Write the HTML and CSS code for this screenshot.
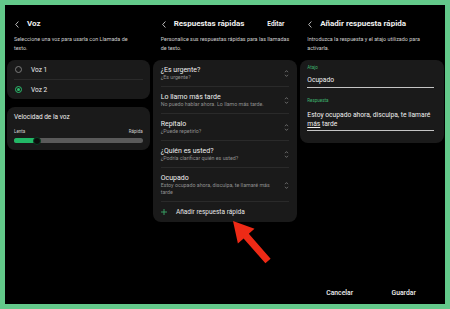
FILE: index.html
```html
<!DOCTYPE html>
<html lang="es">
<head>
  <meta charset="UTF-8">
  <meta name="viewport" content="width=device-width, initial-scale=1.0">
  <title>Respuestas rápidas</title>
  <link rel="stylesheet" href="styles.css">
</head>
<body>
  <div class="page">
    <div class="frame">

      <!-- Voz -->
      <section class="screen">
        <header class="bar">
          <svg class="back" viewBox="0 0 4 7"><path d="M3.4 0.5 L0.7 3.5 L3.4 6.5"/></svg>
          <h1>Voz</h1>
        </header>
        <p class="desc">Seleccione una voz para usarla con Llamada de<br>texto.</p>
        <div class="card">
          <div class="opt"><span class="radio"></span>Voz 1</div>
          <div class="divider"></div>
          <div class="opt"><span class="radio on"></span>Voz 2</div>
        </div>
        <div class="card speed">
          <div class="speed-title">Velocidad de la voz</div>
          <div class="speed-labels"><span>Lenta</span><span>Rápida</span></div>
          <div class="track">
            <div class="fill" style="width:18.1%"></div>
            <span class="thumb" style="left:18.1%"></span>
          </div>
        </div>
      </section>

      <!-- Respuestas rápidas -->
      <section class="screen">
        <header class="bar">
          <svg class="back" viewBox="0 0 4 7"><path d="M3.4 0.5 L0.7 3.5 L3.4 6.5"/></svg>
          <h1>Respuestas rápidas</h1>
          <span class="edit">Editar</span>
        </header>
        <p class="desc">Personalice sus respuestas rápidas para las llamadas<br>de texto.</p>
        <div class="card list">
          <div class="row">
            <div class="txt"><div class="t">¿Es urgente?</div><div class="s">¿Es urgente?</div></div>
            <svg class="updown" viewBox="0 0 5 9"><path d="M1 3.2 L2.5 1.6 L4 3.2 M1 5.8 L2.5 7.4 L4 5.8"/></svg>
          </div>
          <div class="row">
            <div class="txt"><div class="t">Lo llamo más tarde</div><div class="s">No puedo hablar ahora. Lo llamo más tarde.</div></div>
            <svg class="updown" viewBox="0 0 5 9"><path d="M1 3.2 L2.5 1.6 L4 3.2 M1 5.8 L2.5 7.4 L4 5.8"/></svg>
          </div>
          <div class="row">
            <div class="txt"><div class="t">Repítalo</div><div class="s">¿Puede repetirlo?</div></div>
            <svg class="updown" viewBox="0 0 5 9"><path d="M1 3.2 L2.5 1.6 L4 3.2 M1 5.8 L2.5 7.4 L4 5.8"/></svg>
          </div>
          <div class="row">
            <div class="txt"><div class="t">¿Quién es usted?</div><div class="s">¿Podría clarificar quién es usted?</div></div>
            <svg class="updown" viewBox="0 0 5 9"><path d="M1 3.2 L2.5 1.6 L4 3.2 M1 5.8 L2.5 7.4 L4 5.8"/></svg>
          </div>
          <div class="row">
            <div class="txt"><div class="t">Ocupado</div><div class="s">Estoy ocupado ahora, disculpa, te llamaré más<br>tarde</div></div>
            <svg class="updown" viewBox="0 0 5 9"><path d="M1 3.2 L2.5 1.6 L4 3.2 M1 5.8 L2.5 7.4 L4 5.8"/></svg>
          </div>
          <div class="add">
            <svg class="plus" viewBox="0 0 6 6"><path d="M3 0 V6 M0 3 H6"/></svg>
            Añadir respuesta rápida
          </div>
        </div>
      </section>

      <!-- Añadir respuesta rápida -->
      <section class="screen">
        <header class="bar">
          <svg class="back" viewBox="0 0 4 7"><path d="M3.4 0.5 L0.7 3.5 L3.4 6.5"/></svg>
          <h1>Añadir respuesta rápida</h1>
        </header>
        <p class="desc">Introduzca la respuesta y el atajo utilizado para<br>activarla.</p>
        <div class="card form">
          <div class="label">Atajo</div>
          <div class="value">Ocupado</div>
          <div class="label second">Respuesta</div>
          <div class="value multi">Estoy ocupado ahora, disculpa, te llamaré<br><u>más</u> tarde</div>
        </div>
        <div class="actions">
          <span class="action">Cancelar</span>
          <span class="action">Guardar</span>
        </div>
      </section>

    </div>

    <svg class="arrow" viewBox="0 0 450 309">
      <polygon points="233,221 254.5,228.8 248.8,233.8 270.6,258.7 265.4,263.3 243.6,238.4 237.9,243.4"/>
    </svg>
  </div>
</body>
</html>
```

FILE: styles.css
```css
* {
  box-sizing: border-box;
}
body {
  margin: 0;
  background: #63c98a;
  font-family: Roboto, 'Noto Sans', sans-serif;
  color: #f0f0f0;
}
.page {
  position: relative;
  width: 450px;
  height: 309px;
  padding: 5px;
}
.frame {
  display: grid;
  grid-template-columns: repeat(3, 1fr);
  height: 299px;
  background: #000;
}
.screen {
  display: flex;
  flex-direction: column;
  min-width: 0;
  padding: 0 1.5px;
}
.bar {
  display: flex;
  align-items: center;
  height: 10px;
  margin-top: 14px;
  padding: 0 8.5px;
}
.back {
  width: 4px;
  height: 7px;
  margin-right: 8px;
  flex: none;
}
.back path {
  fill: none;
  stroke: #e6e6e6;
  stroke-width: 0.8;
}
h1 {
  flex: 1;
  margin: 0;
  font-size: 8px;
  font-weight: 700;
  line-height: 10px;
  white-space: nowrap;
}
.edit {
  font-size: 6.5px;
  font-weight: 700;
  margin-right: 4px;
}
.desc {
  margin: 5.8px 0 0;
  padding: 0 7.5px;
  font-size: 5.4px;
  line-height: 9px;
  color: #cfcfcf;
  white-space: nowrap;
}
.card {
  background: #1a1a1a;
  border-radius: 8px;
  margin-top: 7.2px;
}

/* voz */
.opt {
  display: flex;
  align-items: center;
  height: 19.2px;
  padding: 0 8.3px;
  font-size: 6.5px;
}
.divider {
  height: 1px;
  margin: 0 7.5px;
  background: #2a2a2a;
}
.radio {
  display: grid;
  place-items: center;
  width: 7px;
  height: 7px;
  margin-right: 9.2px;
  border: 1px solid #7b7b7b;
  border-radius: 50%;
}
.radio.on {
  border-color: #2bbf6e;
}
.radio.on::after {
  content: '';
  width: 3px;
  height: 3px;
  border-radius: 50%;
  background: #2bbf6e;
}
.speed {
  margin-top: 8px;
  padding: 6px 7.5px 6.8px;
}
.speed-title {
  font-size: 6.5px;
  line-height: 8px;
}
.speed-labels {
  display: flex;
  justify-content: space-between;
  margin-top: 8px;
  font-size: 4.5px;
  line-height: 6px;
  color: #d0d0d0;
}
.track {
  position: relative;
  height: 5px;
  margin-top: 2.9px;
  border-radius: 3px;
  background: #5a5a5a;
}
.fill {
  height: 100%;
  border-radius: 3px 0 0 3px;
  background: #22b866;
}
.thumb {
  position: absolute;
  top: -1.5px;
  width: 8px;
  height: 8px;
  margin-left: -4px;
  border-radius: 50%;
  background: #0c0c0c;
  border: 1px solid #0a3d22;
}

/* respuestas */
.row {
  display: flex;
  align-items: center;
  margin: 0 7.5px;
  padding: 6px 0 4.5px;
}
.row + .row,
.add {
  border-top: 1px solid #2a2a2a;
}
.txt {
  flex: 1;
  min-width: 0;
}
.t {
  font-size: 7px;
  line-height: 8px;
}
.s {
  font-size: 5.3px;
  line-height: 7.5px;
  color: #8f8f8f;
  white-space: nowrap;
}
.updown {
  width: 5px;
  height: 9px;
  flex: none;
}
.updown path {
  fill: none;
  stroke: #8a8a8a;
  stroke-width: 0.7;
}
.add {
  display: flex;
  align-items: center;
  height: 20.5px;
  margin: 0 7.5px;
  font-size: 6.5px;
  color: #e8e8e8;
}
.plus {
  width: 6px;
  height: 6px;
  margin-right: 9.3px;
}
.plus path {
  stroke: #3aa96a;
  stroke-width: 0.9;
}

/* añadir */
.form {
  padding: 5.3px 9.5px 11.7px 7.5px;
}
.label {
  font-size: 4.5px;
  line-height: 6px;
  color: #3fb36f;
}
.label.second {
  margin-top: 9.7px;
}
.value {
  margin-top: 4.9px;
  padding-bottom: 2.1px;
  border-bottom: 1px solid #c4c4c4;
  font-size: 6.7px;
  line-height: 9px;
  white-space: nowrap;
}
.value.multi {
  margin-top: 7px;
  padding-bottom: 1.6px;
  line-height: 8.7px;
}
.actions {
  display: flex;
  justify-content: center;
  margin-top: auto;
  padding-bottom: 6.2px;
}
.action {
  width: 64px;
  text-align: center;
  font-size: 6.8px;
  font-weight: 500;
  line-height: 9px;
}

.arrow {
  position: absolute;
  top: 0;
  left: 0;
  width: 450px;
  height: 309px;
  pointer-events: none;
}
.arrow polygon {
  fill: #ee2a16;
}
```
